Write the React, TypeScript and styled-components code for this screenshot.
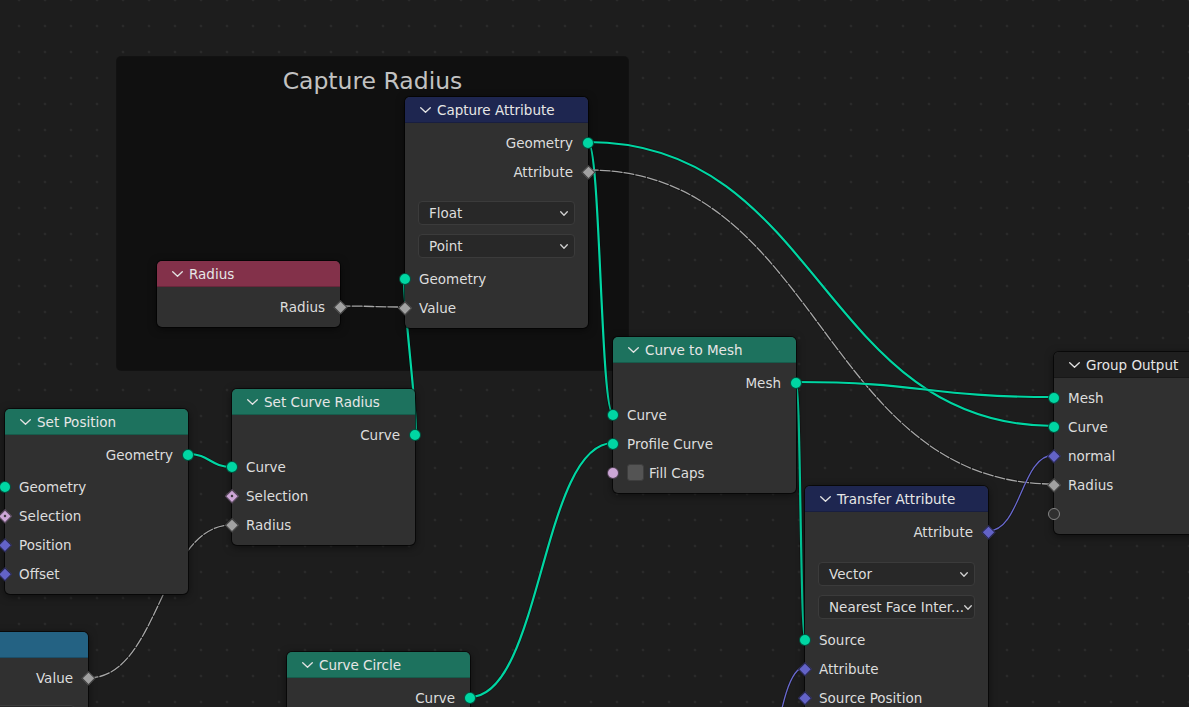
import React from "react";
import styled, { createGlobalStyle, css } from "styled-components";

const GlobalStyle = createGlobalStyle`
  html, body { margin: 0; padding: 0; background: #1d1d1d; overflow: hidden; }
  #root { width: 100vw; height: 100vh; }
`;

const Canvas = styled.div`
  position: relative;
  width: 100%;
  height: 100%;
  overflow: hidden;
  background-color: #1d1d1d;
  background-image: radial-gradient(circle at 13px 13px, #2a2a2a 0 1.1px, transparent 1.7px);
  background-size: 26px 26px;
  background-position: 6px 13px;
  font-family: "DejaVu Sans", "Liberation Sans", sans-serif;
  font-size: 13.5px;
  color: #dddddd;
`;

const Frame = styled.div<{ $x: number; $y: number; $w: number; $h: number }>`
  position: absolute;
  left: ${(p) => p.$x}px;
  top: ${(p) => p.$y}px;
  width: ${(p) => p.$w}px;
  height: ${(p) => p.$h}px;
  background: #101010;
  border-radius: 4px;
  box-shadow: 0 0 0 1px rgba(0, 0, 0, 0.35);
`;

const FrameTitle = styled.div`
  padding-top: 10px;
  text-align: center;
  font-size: 23.5px;
  line-height: 28px;
  color: #c2c2c2;
`;

const WireLayer = styled.svg`
  position: absolute;
  inset: 0;
  width: 100%;
  height: 100%;
  pointer-events: none;
  overflow: visible;
`;

const NodeBox = styled.div<{ $x: number; $y: number; $w: number }>`
  position: absolute;
  left: ${(p) => p.$x}px;
  top: ${(p) => p.$y}px;
  width: ${(p) => p.$w}px;
  background: #303030;
  border-radius: 5px;
  box-shadow: 0 0 0 1px rgba(0, 0, 0, 0.6), 0 2px 9px rgba(0, 0, 0, 0.55);
`;

const Header = styled.div<{ $color: string }>`
  height: 26px;
  display: flex;
  align-items: center;
  gap: 6px;
  padding-left: 15px;
  background: ${(p) => p.$color};
  border-radius: 5px 5px 0 0;
  border-bottom: 1px solid rgba(0, 0, 0, 0.2);
  box-sizing: border-box;
  color: #e6e6e6;
  white-space: nowrap;
`;

const Body = styled.div`
  padding: 5px 0 6px;
`;

const Row = styled.div<{ $out?: boolean }>`
  position: relative;
  height: 29px;
  display: flex;
  align-items: center;
  justify-content: ${(p) => (p.$out ? "flex-end" : "flex-start")};
  padding: 0 15px 0 14px;
  white-space: nowrap;
`;

const SectionGap = styled.div`
  height: 3px;
`;

const Controls = styled.div<{ $top: number }>`
  display: flex;
  flex-direction: column;
  gap: 9px;
  padding: ${(p) => p.$top}px 13px 6px;
`;

const Select = styled.div`
  height: 24px;
  box-sizing: border-box;
  display: flex;
  align-items: center;
  justify-content: space-between;
  padding: 0 6px 0 10px;
  background: #282828;
  border: 1px solid #3b3b3b;
  border-radius: 4px;
  color: #dddddd;
  white-space: nowrap;
  overflow: hidden;
`;

const Checkbox = styled.span`
  width: 17px;
  height: 17px;
  box-sizing: border-box;
  margin-right: 5px;
  background: #545454;
  border: 1px solid #3e3e3e;
  border-radius: 3px;
`;

type Kind = "geo" | "float" | "vector" | "bool" | "boolDot" | "empty";

const socketColor: Record<Kind, string> = {
  geo: "#00d6a3",
  float: "#a1a1a1",
  vector: "#6363c7",
  bool: "#cca6d6",
  boolDot: "#cca6d6",
  empty: "transparent",
};

const isDiamond = (k: Kind) => k === "float" || k === "vector" || k === "boolDot";

const Socket = styled.span<{ $side: "in" | "out"; $kind: Kind; $round?: boolean }>`
  position: absolute;
  top: 50%;
  ${(p) => (p.$side === "in" ? "left: 0;" : "right: 0;")}
  box-sizing: border-box;
  background: ${(p) => socketColor[p.$kind]};
  border: 1px solid rgba(0, 0, 0, 0.6);
  ${(p) =>
    isDiamond(p.$kind) && !p.$round
      ? css`
          width: 9.5px;
          height: 9.5px;
          transform: translate(${p.$side === "in" ? "-50%" : "50%"}, -50%) rotate(45deg);
        `
      : css`
          width: 12px;
          height: 12px;
          border-radius: 50%;
          transform: translate(${p.$side === "in" ? "-50%" : "50%"}, -50%);
        `}
  ${(p) =>
    p.$kind === "empty" &&
    css`
      border: 1.5px solid #858585;
      background: #303030;
    `}
  ${(p) =>
    p.$kind === "boolDot" &&
    css`
      &::after {
        content: "";
        position: absolute;
        left: 50%;
        top: 50%;
        width: 2.5px;
        height: 2.5px;
        background: #2a2a2a;
        transform: translate(-50%, -50%);
      }
    `}
`;

const Chevron = ({ w = 11, h = 6, color = "#e2e2e2" }: { w?: number; h?: number; color?: string }) => (
  <svg width={w} height={h} viewBox={`0 0 ${w} ${h}`} style={{ flex: "none" }}>
    <polyline
      points={`0.7,0.7 ${w / 2},${h - 0.7} ${w - 0.7},0.7`}
      fill="none"
      stroke={color}
      strokeWidth={1.3}
      strokeLinecap="round"
      strokeLinejoin="round"
    />
  </svg>
);

const Node = ({
  x,
  y,
  w = 183,
  title,
  color,
  children,
}: {
  x: number;
  y: number;
  w?: number;
  title: string;
  color: string;
  children: React.ReactNode;
}) => (
  <NodeBox $x={x} $y={y} $w={w}>
    <Header $color={color}>
      <Chevron />
      {title}
    </Header>
    <Body>{children}</Body>
  </NodeBox>
);

const Out = ({ kind, label }: { kind: Kind; label: string }) => (
  <Row $out>
    {label}
    <Socket $side="out" $kind={kind} />
  </Row>
);

const In = ({ kind, label, round, children }: { kind: Kind; label?: string; round?: boolean; children?: React.ReactNode }) => (
  <Row>
    {children ?? label}
    <Socket $side="in" $kind={kind} $round={round} />
  </Row>
);

const Dropdown = ({ label }: { label: string }) => (
  <Select>
    <span>{label}</span>
    <Chevron w={8} h={5} color="#d0d0d0" />
  </Select>
);

type WireDef = { a: [number, number]; b: [number, number]; color: string; width: number; dashed?: boolean };

const wirePath = ([x1, y1]: [number, number], [x2, y2]: [number, number]) => {
  const h = Math.abs(x2 - x1) * 0.5;
  return `M${x1} ${y1} C${x1 + h} ${y1} ${x2 - h} ${y2} ${x2} ${y2}`;
};

const TEAL = "#00d6a3";
const GRAY = "#a6a6a6";
const PURPLE = "#6a6ad0";

const wires: WireDef[] = [
  { a: [588, 142], b: [1054, 426], color: TEAL, width: 2.2 },
  { a: [588, 142], b: [613, 414], color: TEAL, width: 2.2 },
  { a: [588, 170], b: [1054, 484], color: GRAY, width: 1.3, dashed: true },
  { a: [340, 306], b: [405, 307], color: GRAY, width: 1.3, dashed: true },
  { a: [415, 434], b: [405, 278], color: TEAL, width: 2.2 },
  { a: [188, 454], b: [232, 467], color: TEAL, width: 2.2 },
  { a: [88, 678], b: [232, 525], color: GRAY, width: 1.3, dashed: true },
  { a: [470, 697], b: [613, 443], color: TEAL, width: 2.2 },
  { a: [796, 382], b: [1054, 397], color: TEAL, width: 2.2 },
  { a: [796, 382], b: [805, 639], color: TEAL, width: 2.2 },
  { a: [988, 531], b: [1054, 455], color: PURPLE, width: 1.3 },
  { a: [742, 830], b: [805, 667], color: PURPLE, width: 1.3 },
];

export default function App() {
  return (
    <>
      <GlobalStyle />
      <Canvas>
        <Frame $x={117} $y={57} $w={511} $h={313}>
          <FrameTitle>Capture Radius</FrameTitle>
        </Frame>

        <WireLayer>
          {wires.map((w, i) => (
            <g key={i}>
              <path d={wirePath(w.a, w.b)} fill="none" stroke="rgba(0,0,0,0.35)" strokeWidth={w.width + 1.4} />
              <path
                d={wirePath(w.a, w.b)}
                fill="none"
                stroke={w.color}
                strokeWidth={w.width}
                strokeDasharray={w.dashed ? "10 2" : undefined}
                strokeLinecap="round"
              />
            </g>
          ))}
        </WireLayer>

        <Node x={405} y={97} title="Capture Attribute" color="#1e2650">
          <Out kind="geo" label="Geometry" />
          <Out kind="float" label="Attribute" />
          <Controls $top={15}>
            <Dropdown label="Float" />
            <Dropdown label="Point" />
          </Controls>
          <In kind="geo" label="Geometry" />
          <In kind="float" label="Value" />
        </Node>

        <Node x={157} y={261} title="Radius" color="#83314a">
          <Out kind="float" label="Radius" />
        </Node>

        <Node x={5} y={409} title="Set Position" color="#1d725e">
          <Out kind="geo" label="Geometry" />
          <SectionGap />
          <In kind="geo" label="Geometry" />
          <In kind="boolDot" label="Selection" />
          <In kind="vector" label="Position" />
          <In kind="vector" label="Offset" />
        </Node>

        <Node x={232} y={389} title="Set Curve Radius" color="#1d725e">
          <Out kind="geo" label="Curve" />
          <SectionGap />
          <In kind="geo" label="Curve" />
          <In kind="boolDot" label="Selection" />
          <In kind="float" label="Radius" />
        </Node>

        <Node x={613} y={337} title="Curve to Mesh" color="#1d725e">
          <Out kind="geo" label="Mesh" />
          <SectionGap />
          <In kind="geo" label="Curve" />
          <In kind="geo" label="Profile Curve" />
          <In kind="bool" round>
            <Checkbox />
            Fill Caps
          </In>
        </Node>

        <Node x={1054} y={352} title="Group Output" color="#1f1f1f">
          <In kind="geo" label="Mesh" />
          <In kind="geo" label="Curve" />
          <In kind="vector" label="normal" />
          <In kind="float" label="Radius" />
          <In kind="empty" label="" />
        </Node>

        <Node x={805} y={486} title="Transfer Attribute" color="#1e2650">
          <Out kind="vector" label="Attribute" />
          <Controls $top={16}>
            <Dropdown label="Vector" />
            <Dropdown label="Nearest Face Inter..." />
          </Controls>
          <In kind="geo" label="Source" />
          <In kind="vector" label="Attribute" />
          <In kind="vector" label="Source Position" />
        </Node>

        <Node x={287} y={652} title="Curve Circle" color="#1d725e">
          <Out kind="geo" label="Curve" />
        </Node>

        <NodeBox $x={-95} $y={632} $w={183}>
          <Header $color="#246283" />
          <Body>
            <Out kind="float" label="Value" />
            <Controls $top={13}>
              <Select />
            </Controls>
          </Body>
        </NodeBox>
      </Canvas>
    </>
  );
}
